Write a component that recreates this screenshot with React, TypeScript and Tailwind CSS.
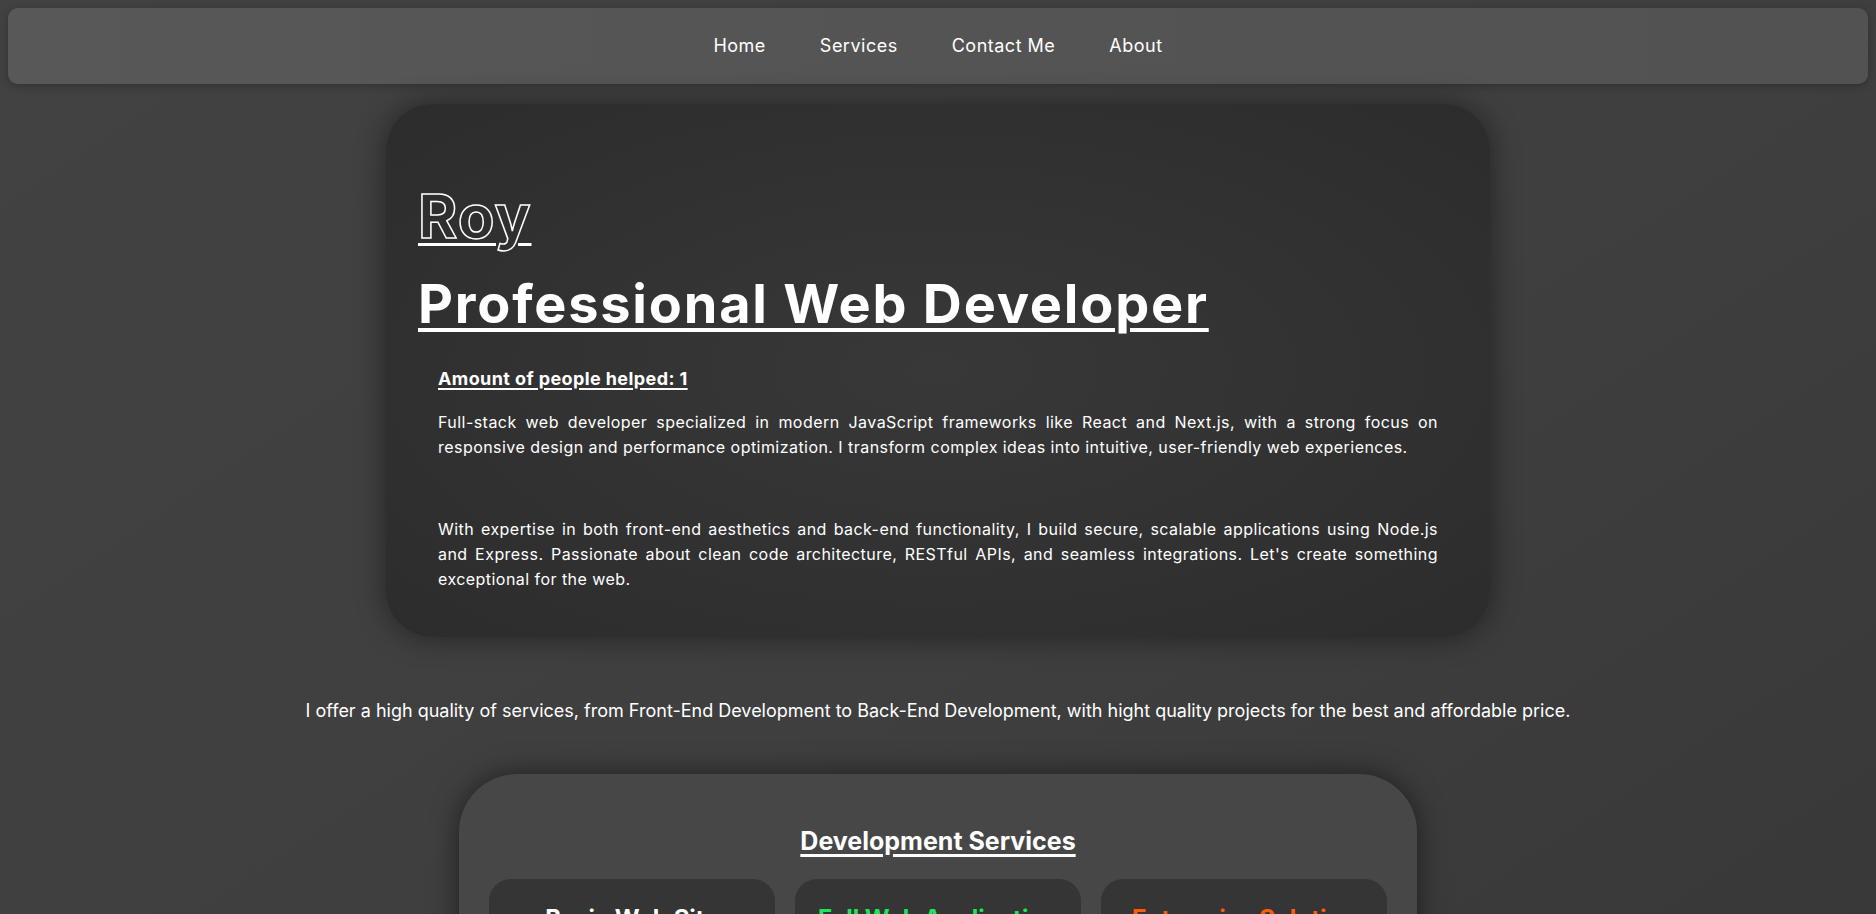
import React from 'react';

const navLinks = ['Home', 'Services', 'Contact Me', 'About'];

const services = [
  { title: 'Basic Web Site', color: 'text-white' },
  { title: 'Full Web Application', color: 'text-[#1ee65a]' },
  { title: 'Enterprise Solution', color: 'text-[#ff5c0a]' },
];

const Navbar = () => (
  <nav className="mx-2 flex h-[76px] items-center justify-center gap-[54px] rounded-[10px] bg-gradient-to-r from-[#585858] via-[#545454] to-[#525252] shadow-[0_2px_8px_rgba(0,0,0,0.25)]">
    {navLinks.map((link) => (
      <a key={link} href="#" className="text-[18px] leading-[26px] tracking-[0.5px] text-white">
        {link}
      </a>
    ))}
  </nav>
);

const Hero = () => (
  <section className="mx-auto mt-5 w-[1104px] rounded-[46px] bg-[radial-gradient(ellipse_at_center,#383838,#2c2c2c)] px-8 pt-[76px] pb-[45px] shadow-[0_0_30px_rgba(0,0,0,0.45)]">
    <h1 className="text-[60px] font-bold leading-[72px] tracking-[1px] text-transparent underline decoration-white decoration-[3px] underline-offset-[5px] [-webkit-text-stroke:1.5px_white]">
      Roy
    </h1>
    <h2 className="mt-5 text-[54px] font-bold leading-[64px] tracking-[1.8px] text-white underline decoration-[4px] underline-offset-[5px]">
      Professional Web Developer
    </h2>
    <div className="px-5 text-white">
      <p className="mt-[29px] text-[18px] font-bold leading-[27px] tracking-[0.4px] underline decoration-2 underline-offset-[3px]">
        Amount of people helped: 1
      </p>
      <p className="mt-[18px] text-justify text-[16px] leading-[25px] tracking-[0.45px]">
        Full-stack web developer specialized in modern JavaScript frameworks like React and Next.js, with a strong focus on
        responsive design and performance optimization. I transform complex ideas into intuitive, user-friendly web experiences.
      </p>
      <p className="mt-[57px] text-justify text-[16px] leading-[25px] tracking-[0.45px]">
        With expertise in both front-end aesthetics and back-end functionality, I build secure, scalable applications using Node.js
        and Express. Passionate about clean code architecture, RESTful APIs, and seamless integrations. Let's create something
        exceptional for the web.
      </p>
    </div>
  </section>
);

const Services = () => (
  <section className="mx-auto mt-[50px] w-[958px] rounded-[58px] bg-[#474747] px-[30px] pt-[49px] pb-10 shadow-[0_0_28px_rgba(0,0,0,0.5)]">
    <h2 className="text-center text-[25px] font-bold leading-[36px] text-white underline decoration-[3px] underline-offset-[4px]">
      Development Services
    </h2>
    <div className="mt-5 grid grid-cols-3 gap-5">
      {services.map((s) => (
        <div key={s.title} className="h-[260px] rounded-[22px] bg-[#353535] px-5 pt-6">
          <h3 className={`text-center text-[24px] font-bold leading-[32px] ${s.color}`}>{s.title}</h3>
        </div>
      ))}
    </div>
  </section>
);

export default function App() {
  return (
    <div className="min-h-screen bg-gradient-to-br from-[#424242] via-[#3f3f3f] to-[#363636] pt-2 pb-20 font-['Inter',sans-serif]">
      <Navbar />
      <Hero />
      <p className="mt-[61px] text-center text-[18px] leading-[26px] text-white">
        I offer a high quality of services, from Front-End Development to Back-End Development, with hight quality projects for
        the best and affordable price.
      </p>
      <Services />
    </div>
  );
}
